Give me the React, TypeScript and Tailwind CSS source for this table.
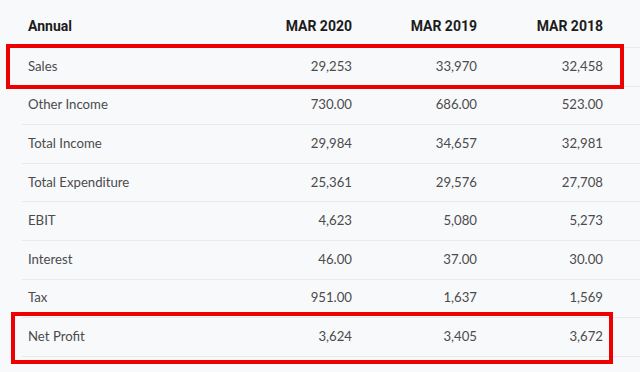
import React from 'react';

interface Row {
  label: string;
  values: [string, string, string];
}

const years = ['MAR 2020', 'MAR 2019', 'MAR 2018'];

const rows: Row[] = [
  { label: 'Sales', values: ['29,253', '33,970', '32,458'] },
  { label: 'Other Income', values: ['730.00', '686.00', '523.00'] },
  { label: 'Total Income', values: ['29,984', '34,657', '32,981'] },
  { label: 'Total Expenditure', values: ['25,361', '29,576', '27,708'] },
  { label: 'EBIT', values: ['4,623', '5,080', '5,273'] },
  { label: 'Interest', values: ['46.00', '37.00', '30.00'] },
  { label: 'Tax', values: ['951.00', '1,637', '1,569'] },
  { label: 'Net Profit', values: ['3,624', '3,405', '3,672'] },
];

export default function App() {
  return (
    <div className="relative w-[640px] h-[372px] overflow-hidden bg-[#f8f9fb]">
      <div className="pl-[22px]">
        {/* header */}
        <div
          className="flex items-center h-[48px] pt-[5px] border-b border-[#e7e9ec] text-[14px] font-bold text-[#1c1c1c]"
          style={{ fontFamily: 'Roboto, "Liberation Sans", sans-serif' }}
        >
          <div className="w-[205px] pl-[6px]">Annual</div>
          {years.map((y, i) => (
            <div key={y} className={`${i === 2 ? 'w-[126px]' : 'w-[125px]'} text-right`}>
              {y}
            </div>
          ))}
        </div>

        {/* body */}
        {rows.map((row) => (
          <div
            key={row.label}
            className="flex items-center h-[38.6px] border-b border-[#e7e9ec] text-[13.2px] text-[#4b4b4b]"
            style={{ fontFamily: 'Lato, "Open Sans", sans-serif' }}
          >
            <div className="w-[205px] pl-[6px]">{row.label}</div>
            {row.values.map((v, i) => (
              <div key={i} className={`${i === 2 ? 'w-[126px]' : 'w-[125px]'} text-right`}>
                {v}
              </div>
            ))}
          </div>
        ))}
      </div>

      {/* highlight boxes */}
      <div className="absolute left-[6px] top-[44px] w-[618px] h-[45px] border-4 border-[#ee0000]" />
      <div className="absolute left-[11px] top-[312px] w-[602px] h-[52px] border-4 border-[#ee0000]" />
    </div>
  );
}
